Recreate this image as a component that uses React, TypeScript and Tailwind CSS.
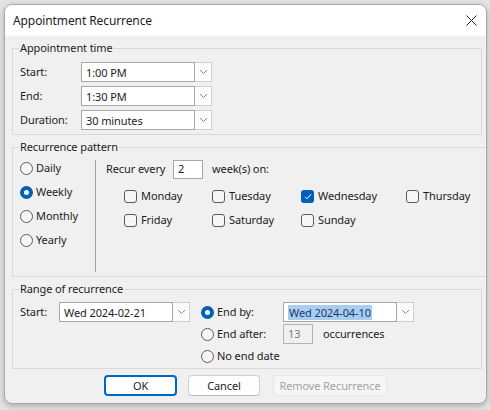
import React from 'react';

const Chevron = () => (
  <svg width="9" height="6" viewBox="0 0 9 6" fill="none">
    <path d="M1 1l3.5 3.5L8 1" stroke="#8a8a8a" strokeWidth="1" />
  </svg>
);

const Combo = ({ value, selected }: { value: string; selected?: boolean }) => (
  <div className="flex h-[20px]">
    <div className="w-[114px] h-full bg-white border border-[#a8a8a8] flex items-center pl-[4px]">
      <span className={selected ? 'bg-[#a9cdf1] text-[#1b3b6b] leading-[15px] px-[1px]' : 'leading-[15px]'}>{value}</span>
    </div>
    <div className="w-[17px] h-full bg-[#fbfbfb] border border-l-0 border-[#cfcfcf] flex items-center justify-center">
      <Chevron />
    </div>
  </div>
);

const Radio = ({ checked }: { checked?: boolean }) =>
  checked ? (
    <span className="w-[13px] h-[13px] rounded-full bg-[#005fb8] flex items-center justify-center shrink-0">
      <span className="w-[5px] h-[5px] rounded-full bg-white" />
    </span>
  ) : (
    <span className="w-[13px] h-[13px] rounded-full border border-[#5b5b5b] bg-[#f6f6f6] shrink-0" />
  );

const Checkbox = ({ checked }: { checked?: boolean }) =>
  checked ? (
    <span className="w-[13px] h-[13px] rounded-[3px] bg-[#005fb8] flex items-center justify-center shrink-0">
      <svg width="8" height="7" viewBox="0 0 8 7" fill="none">
        <path d="M1 3.8l2 2L7 1.2" stroke="white" strokeWidth="1" />
      </svg>
    </span>
  ) : (
    <span className="w-[13px] h-[13px] rounded-[3px] border border-[#5b5b5b] bg-[#f6f6f6] shrink-0" />
  );

const Day = ({ name, checked, w }: { name: string; checked?: boolean; w: string }) => (
  <div className={`flex items-center gap-[4px] h-[20px] ${w}`}>
    <Checkbox checked={checked} />
    <span>{name}</span>
  </div>
);

const Group = ({ title, children, className = '' }: { title: string; children: React.ReactNode; className?: string }) => (
  <fieldset className={`w-[470px] border border-[#d9d9d9] p-0 m-0 ${className}`}>
    <legend className="ml-[6px] px-[1px] leading-[14px]">{title}</legend>
    {children}
  </fieldset>
);

export default function App() {
  return (
    <div className="w-[490px] h-[410px] bg-[#e4e4e4] pt-[4px] pl-[4px] font-['Noto_Sans',sans-serif] text-[11px] tracking-[-0.1px] text-[#1c1c1c]">
      <div className="w-[483px] h-[400px] rounded-[8px] border border-[#a9a9a9] bg-[#f0f0f0] overflow-hidden shadow-[0_2px_6px_rgba(0,0,0,0.25)]">
        <div className="h-[31px] bg-white flex items-center justify-between pl-[8px] pr-[8px]">
          <span className="text-[12px]">Appointment Recurrence</span>
          <svg width="11" height="11" viewBox="0 0 11 11" className="mr-[1px]">
            <path d="M0.5 0.5l10 10M10.5 0.5l-10 10" stroke="#222" strokeWidth="1" />
          </svg>
        </div>

        <div className="pl-[7px] pt-[5px]">
          <Group title="Appointment time">
            <div className="pl-[7px] pt-[7px] pb-[4px] flex flex-col gap-[4px]">
              {[
                ['Start:', '1:00 PM'],
                ['End:', '1:30 PM'],
                ['Duration:', '30 minutes'],
              ].map(([label, value]) => (
                <div key={label} className="flex items-center h-[20px]">
                  <span className="w-[61px]">{label}</span>
                  <Combo value={value} />
                </div>
              ))}
            </div>
          </Group>

          <Group title="Recurrence pattern" className="mt-[5px]">
            <div className="flex items-start pb-[4px]">
              <div className="w-[82px] pl-[7px] pt-[4px] flex flex-col gap-[4px]">
                {['Daily', 'Weekly', 'Monthly', 'Yearly'].map((r) => (
                  <div key={r} className="flex items-center gap-[3px] h-[20px]">
                    <Radio checked={r === 'Weekly'} />
                    <span>{r}</span>
                  </div>
                ))}
              </div>
              <div className="mt-[6px] h-[112px] border-l border-[#a0a0a0] pl-[10px]">
                <div className="flex items-center h-[19px]">
                  <span className="w-[67px]">Recur every</span>
                  <div className="w-[30px] h-[19px] bg-white border border-[#a8a8a8] flex items-center pl-[4px]">2</div>
                  <span className="ml-[9px]">week(s) on:</span>
                </div>
                <div className="ml-[18px] mt-[7px] flex flex-col gap-[4px]">
                  <div className="flex">
                    <Day name="Monday" w="w-[88px]" />
                    <Day name="Tuesday" w="w-[89px]" />
                    <Day name="Wednesday" w="w-[105px]" checked />
                    <Day name="Thursday" w="w-[80px]" />
                  </div>
                  <div className="flex">
                    <Day name="Friday" w="w-[88px]" />
                    <Day name="Saturday" w="w-[89px]" />
                    <Day name="Sunday" w="w-[105px]" />
                  </div>
                </div>
              </div>
            </div>
          </Group>

          <Group title="Range of recurrence" className="mt-[5px]">
            <div className="flex items-start pl-[7px] pt-[6px] pb-[2px]">
              <div className="flex items-center h-[20px]">
                <span className="w-[39px]">Start:</span>
                <Combo value="Wed 2024-02-21" />
              </div>
              <div className="ml-[11px] flex flex-col gap-[2px]">
                <div className="flex items-center h-[20px]">
                  <Radio checked />
                  <span className="ml-[3px] w-[66px]">End by:</span>
                  <Combo value="Wed 2024-04-10" selected />
                </div>
                <div className="flex items-center h-[20px]">
                  <Radio />
                  <span className="ml-[3px] w-[66px]">End after:</span>
                  <div className="w-[30px] h-[20px] bg-[#f0f0f0] border border-[#b4b4b4] flex items-center pl-[4px] text-[#7a7a7a]">13</div>
                  <span className="ml-[10px]">occurrences</span>
                </div>
                <div className="flex items-center h-[20px]">
                  <Radio />
                  <span className="ml-[3px]">No end date</span>
                </div>
              </div>
            </div>
          </Group>

          <div className="flex pl-[92px] mt-[6px] h-[21px]">
            <button className="w-[73px] h-full rounded-[4px] border-2 border-[#0067c0] bg-[#fdfdfd] leading-none">OK</button>
            <button className="ml-[11px] w-[72px] h-full rounded-[4px] border border-[#d0d0d0] border-b-[#b8b8b8] bg-[#fdfdfd] leading-none">Cancel</button>
            <button className="ml-[13px] w-[114px] h-full rounded-[4px] border border-[#e6e6e6] bg-[#f6f6f6] text-[#a2a2a2] leading-none whitespace-nowrap">Remove Recurrence</button>
          </div>
        </div>
      </div>
    </div>
  );
}
